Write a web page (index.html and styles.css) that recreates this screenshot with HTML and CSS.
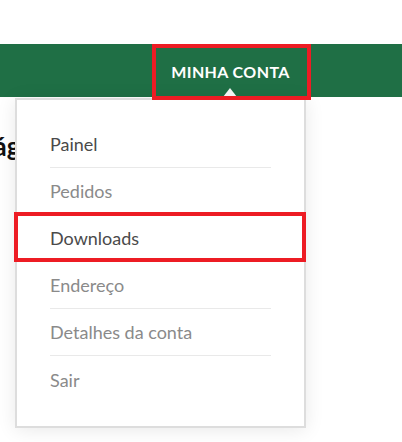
FILE: index.html
```html
<!DOCTYPE html>
<html lang="pt-BR">
<head>
<meta charset="utf-8">
<title>Minha conta</title>
<link rel="stylesheet" href="styles.css">
</head>
<body>
<div class="topstrip"></div>
<nav class="bar">
  <div class="account">
    <span class="account-label">MINHA CONTA</span>
    <div class="dropdown">
      <ul class="menu">
        <li class="menu-item is-dark">Painel</li>
        <li class="menu-item">Pedidos</li>
        <li class="menu-item is-dark is-marked">Downloads</li>
        <li class="menu-item">Endereço</li>
        <li class="menu-item">Detalhes da conta</li>
        <li class="menu-item">Sair</li>
      </ul>
    </div>
  </div>
</nav>
<main class="content">
  <h1 class="page-title">Minha página</h1>
</main>
</body>
</html>
```
FILE: styles.css
```css
* { box-sizing: border-box; }
html, body { margin: 0; padding: 0; background: #fff; }
body { font-family: Lato, "Open Sans", Arial, sans-serif; overflow: hidden; width: 402px; height: 442px; }

.topstrip { height: 44px; }

.bar {
  height: 53px;
  background: #1f6f45;
  display: flex;
  justify-content: flex-end;
  padding-right: 91px;
  position: relative;
  z-index: 2;
}

.account {
  position: relative;
  width: 159px;
  height: 53px;
  display: flex;
  align-items: center;
  justify-content: center;
  padding-top: 1px;
}
.account::after {
  content: "";
  position: absolute;
  left: 0; right: 0; top: 0; bottom: -3px;
  border: 4px solid #ed1c24;
  z-index: 5;
}
.account::before {
  content: "";
  position: absolute;
  bottom: 0;
  left: 71px;
  border-left: 7px solid transparent;
  border-right: 7px solid transparent;
  border-bottom: 9px solid #f4f4f4;
  z-index: 4;
}
.account-label {
  color: #fff;
  font-weight: 700;
  font-size: 16px;
  letter-spacing: 0.4px;
  margin-left: -2px;
}

.dropdown {
  position: absolute;
  top: 54px;
  left: -137px;
  width: 291px;
  background: #fff;
  border: 2px solid #dddddd;
  box-shadow: 0 2px 18px rgba(0,0,0,0.09);
  z-index: 3;
}

.menu {
  list-style: none;
  margin: 0;
  padding: 21px 33px 23px 33px;
}
.menu-item {
  position: relative;
  height: 47px;
  display: flex;
  align-items: center;
  font-size: 18px;
  color: #8a8a8a;
  border-bottom: 1px solid #e9e9e9;
  padding-top: 0;
}
.menu-item:last-child { border-bottom: none; }
.menu-item.is-dark { color: #4a4a4a; }
.menu-item.is-marked::after {
  content: "";
  position: absolute;
  left: -36px;
  right: -35px;
  top: -3px;
  bottom: -1px;
  border: 4px solid #ed1c24;
}

.content {
  position: relative;
  z-index: 1;
  padding-top: 33px;
}
.page-title {
  margin: 0 0 0 -101px;
  font-size: 26px;
  font-weight: 700;
  color: #111;
  white-space: nowrap;
}
```
